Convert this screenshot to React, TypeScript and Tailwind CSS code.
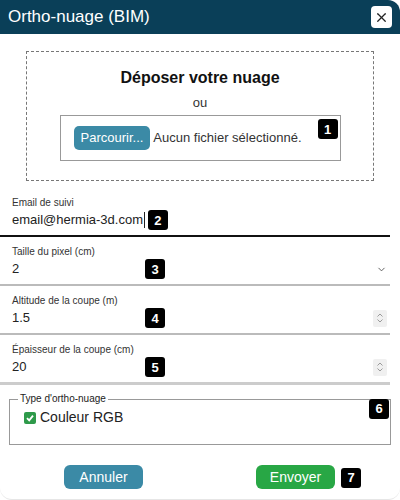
import { ChevronDown, X } from "lucide-react";

function Badge({ n }: { n: number }) {
  return (
    <span className="inline-flex h-5 w-5 shrink-0 items-center justify-center rounded-[3px] bg-black text-[13px] font-bold leading-none text-white">
      {n}
    </span>
  );
}

function Spinner() {
  return (
    <div className="flex h-[17px] w-[14px] flex-col items-center justify-center rounded-[2px] bg-[#f0f0f0] text-[#9a9a9a]">
      <svg width="8" height="12" viewBox="0 0 8 12" fill="none" stroke="currentColor" strokeWidth="1">
        <path d="M1.5 4.5 L4 2 L6.5 4.5" />
        <path d="M1.5 7.5 L4 10 L6.5 7.5" />
      </svg>
    </div>
  );
}

function Field({
  label,
  value,
  badge,
  right,
  border,
  caret,
}: {
  label: string;
  value: string;
  badge: number;
  right?: React.ReactNode;
  border: string;
  caret?: boolean;
}) {
  return (
    <div className={`mr-[10px] flex flex-col pb-[4px] pl-3 pr-[3px] pt-[8px] ${border}`}>
      <span className="text-[10px] leading-[13px] text-[#333]">{label}</span>
      <div className="flex h-[22px] items-center">
        <span className="flex min-w-[133px] items-center whitespace-nowrap pr-[3px] text-[13px] text-[#222]">
          {value}
          {caret && <span className="ml-[1px] h-[16px] w-px bg-[#222]" />}
        </span>
        <Badge n={badge} />
        <div className="ml-auto flex items-center">{right}</div>
      </div>
    </div>
  );
}

export default function App() {
  return (
    <div className="h-[500px] w-[400px] bg-white" style={{ fontFamily: '"Liberation Sans", Arial, sans-serif' }}>
      <div className="flex h-full flex-col overflow-hidden rounded-tr-xl rounded-b-xl border-b border-[#e6e6e6] bg-white">
        {/* header */}
        <div className="flex h-[34px] shrink-0 items-center justify-between bg-[#0a3f58] pl-2 pr-2">
          <span className="text-[17px] text-white">Ortho-nuage (BIM)</span>
          <button className="flex h-[22px] w-[21px] items-center justify-center rounded-[4px] bg-white text-[#222]">
            <X size={15} strokeWidth={2} />
          </button>
        </div>

        {/* drop zone */}
        <div className="mx-[26px] mt-[17px] flex h-[130px] shrink-0 flex-col items-center border border-dashed border-[#777] pt-[14px]">
          <span className="text-[16px] font-bold text-[#111]">Déposer votre nuage</span>
          <span className="mt-[3px] text-[13px] text-[#333]">ou</span>
          <div className="relative mt-[2px] flex h-[46px] w-[281px] items-center border border-[#999] pl-[13px]">
            <button className="h-[24px] rounded-[5px] bg-[#3b8aa6] px-[7px] text-[13px] text-white">Parcourir...</button>
            <span className="ml-[3px] text-[13px] text-[#333]">Aucun fichier sélectionné.</span>
            <div className="absolute right-[2px] top-[1px]">
              <Badge n={1} />
            </div>
          </div>
        </div>

        {/* form fields */}
        <div className="mt-[7px] flex flex-col">
          <Field
            label="Email de suivi"
            value="email@hermia-3d.com"
            badge={2}
            caret
            border="border-b-2 border-[#111]"
          />
          <Field
            label="Taille du pixel (cm)"
            value="2"
            badge={3}
            border="border-b-2 border-[#bbb]"
            right={<ChevronDown size={11} className="text-[#555]" strokeWidth={2} />}
          />
          <Field
            label="Altitude de la coupe (m)"
            value="1.5"
            badge={4}
            border="border-b-2 border-[#bbb]"
            right={<Spinner />}
          />
          <Field
            label="Épaisseur de la coupe (cm)"
            value="20"
            badge={5}
            border="border-b-[3px] border-[#ccc]"
            right={<Spinner />}
          />
        </div>

        {/* type fieldset */}
        <fieldset className="relative mx-[9px] mt-[8px] h-[52px] shrink-0 border border-[#999] px-[14px]">
          <legend className="-ml-[6px] px-[2px] text-[10px] leading-[12px] text-[#222]">Type d'ortho-nuage</legend>
          <label className="mt-[2px] flex items-center gap-[4px] text-[14px] text-[#222]">
            <span className="flex h-[12px] w-[12px] items-center justify-center rounded-[2px] bg-[#2e9a4a]">
              <svg width="10" height="10" viewBox="0 0 10 10" fill="none" stroke="white" strokeWidth="1.8">
                <path d="M2 5.2 L4.2 7.4 L8 2.6" />
              </svg>
            </span>
            Couleur RGB
          </label>
          <div className="absolute right-[1px] top-[-9px]">
            <Badge n={6} />
          </div>
        </fieldset>

        {/* actions */}
        <div className="mt-[20px] flex items-center pl-[64px]">
          <button className="h-[24px] w-[79px] rounded-[6px] bg-[#3b8aa6] text-[14px] text-white">Annuler</button>
          <button className="ml-[113px] h-[24px] w-[79px] rounded-[6px] bg-[#28a745] text-[14px] text-white">Envoyer</button>
          <span className="ml-[6px]">
            <Badge n={7} />
          </span>
        </div>
      </div>
    </div>
  );
}
